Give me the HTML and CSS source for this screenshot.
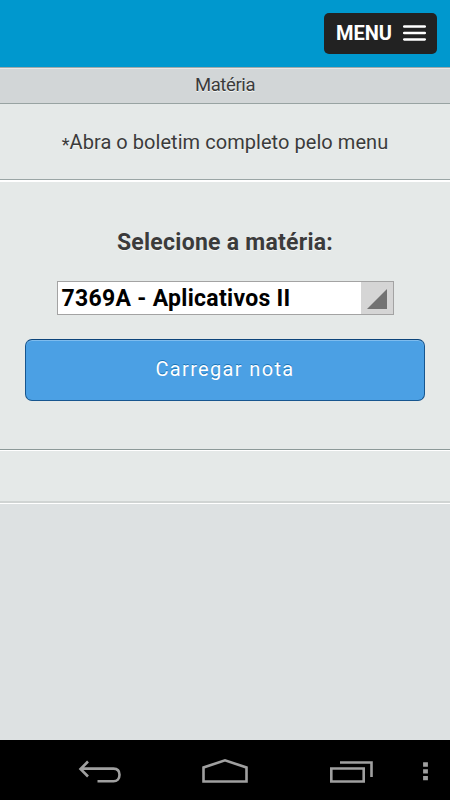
FILE: index.html
```html
<!DOCTYPE html>
<html lang="pt-BR">
<head>
    <meta charset="UTF-8">
    <meta name="viewport" content="width=device-width, initial-scale=1.0">
    <title>Matéria</title>
    <link rel="stylesheet" href="styles.css">
</head>
<body>

    <header class="topo">
        <button class="menu-botao" type="button">
            <span>MENU</span>
            <svg class="menu-icone" width="23" height="16" viewBox="0 0 23 16">
                <path d="M1.2 1.6H21.8M1.2 8H21.8M1.2 14.4H21.8" stroke="#fff" stroke-width="2.5" stroke-linecap="round"/>
            </svg>
        </button>
    </header>

    <h1 class="titulo">Matéria</h1>

    <p class="aviso"><span class="asterisco">*</span>Abra o boletim completo pelo menu</p>

    <main class="conteudo">
        <h2>Selecione a matéria:</h2>
        <div class="seletor">
            <span class="seletor-texto">7369A - Aplicativos II</span>
            <span class="seletor-seta">
                <svg width="20" height="20" viewBox="0 0 20 20"><path d="M20 0V20H0Z" fill="#727272"/></svg>
            </span>
        </div>
        <button class="carregar" type="button">Carregar nota</button>
    </main>

    <div class="rodape"></div>

    <!-- Barra de navegação do sistema -->
    <nav class="barra">
        <svg width="450" height="60" viewBox="0 0 450 60" fill="none" stroke="#a0a0a0" stroke-width="2.6">
            <path d="M88 21.5L80.5 29L88 36.5M81 28.6H113.5C117.5 28.6 119.5 31 119.5 34.8C119.5 39 117 41.3 113.5 41.3H97.5"/>
            <path d="M203.5 41.5V27.5L225 20.3L246.5 27.5V41.5Z"/>
            <path d="M331.3 28.5H363.7V41.5H331.3ZM340 22.5H371.5V37"/>
            <path d="M425.5 22.3V26.7M425.5 29.2V33.6M425.5 36V40.2" stroke-width="4.8"/>
        </svg>
    </nav>

</body>
</html>
```

FILE: styles.css
```css
* {
    box-sizing: border-box;
}

body {
    margin: 0;
    height: 100vh;
    display: flex;
    flex-direction: column;
    background-color: #dde1e2;
    font-family: Roboto, 'Liberation Sans', sans-serif;
    color: #3b3b3b;
    text-shadow: 0 1px 0 #f4f6f6;
}

button {
    font-family: inherit;
    cursor: pointer;
}

.topo {
    height: 67px;
    padding: 13px 13px 0 0;
    display: flex;
    justify-content: flex-end;
    align-items: flex-start;
    background-color: #0098ce;
}

.menu-botao {
    width: 113px;
    height: 41px;
    padding: 0 11px 1px 12px;
    display: flex;
    justify-content: space-between;
    align-items: center;
    background-color: #222;
    border: none;
    border-radius: 5px;
    color: #fff;
    font-size: 20px;
    font-weight: bold;
    text-shadow: none;
}

.titulo {
    height: 37px;
    margin: 0;
    border-top: 1px solid #9fa9aa;
    border-bottom: 1px solid #98a3a2;
    box-shadow: inset 0 1px 0 #e6e8e8;
    background-color: #d2d6d7;
    font-size: 18.5px;
    font-weight: normal;
    line-height: 34px;
    letter-spacing: -0.4px;
    text-align: center;
}

.aviso {
    height: 76px;
    margin: 0;
    border-bottom: 1px solid #9aa5a5;
    background-color: #e5e9e8;
    font-size: 20px;
    line-height: 76px;
    letter-spacing: 0.05px;
    text-align: center;
}

.asterisco {
    position: relative;
    top: 2px;
    font-size: 18px;
}

.conteudo {
    height: 270px;
    padding: 0 25px;
    display: flex;
    flex-direction: column;
    align-items: center;
    border-top: 2px solid #fff;
    border-bottom: 1px solid #8c9998;
    background-color: #e5e9e8;
}

.conteudo h2 {
    margin: 47px 0 24px;
    font-size: 23px;
    font-weight: bold;
    line-height: 28px;
    letter-spacing: 0.26px;
}

.seletor {
    width: 337px;
    height: 34px;
    display: flex;
    border: 1px solid #a3a3a3;
    background-color: #fff;
    color: #000;
    text-shadow: none;
}

.seletor-texto {
    flex: 1;
    padding-left: 4px;
    font-size: 23px;
    font-weight: bold;
    line-height: 33px;
    letter-spacing: 0.3px;
    white-space: nowrap;
}

.seletor-seta {
    width: 32px;
    padding: 7px 0 0 6px;
    background-color: #d5d5d5;
}

.seletor-seta svg {
    display: block;
}

.carregar {
    width: 400px;
    height: 62px;
    margin-top: 24px;
    padding: 0 0 2px;
    border: 1px solid #17568f;
    border-top-color: #0c447a;
    border-radius: 7px;
    box-shadow: inset 0 1px 0 #7ebcee;
    background-color: #4ba0e4;
    color: #fff;
    font-size: 20px;
    letter-spacing: 1.35px;
    text-shadow: 0 -1px 0 #1974b8;
}

.rodape {
    height: 54px;
    border-top: 1px solid #fff;
    border-bottom: 1px solid #fff;
    box-shadow: inset 0 -2px 0 #d0d4d3;
    background-color: #e5e9e8;
}

.barra {
    height: 60px;
    margin-top: auto;
    background-color: #000;
}

.barra svg {
    display: block;
}
```
